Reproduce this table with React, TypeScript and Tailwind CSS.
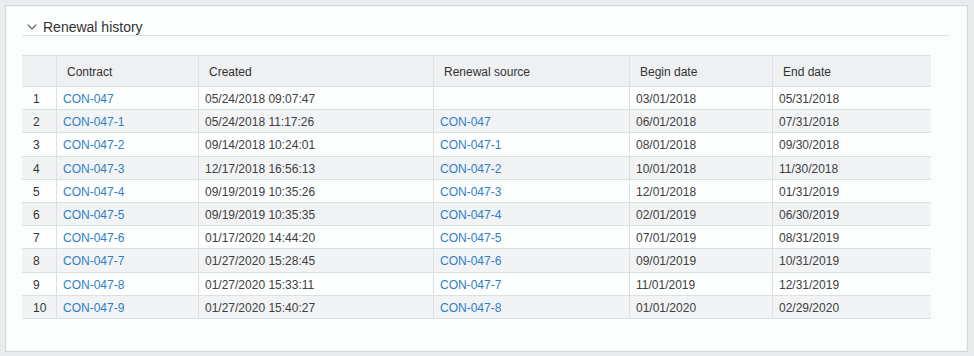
import React from "react";

type Row = { n: number; contract: string; created: string; source: string; begin: string; end: string };

const rows: Row[] = [
  { n: 1, contract: "CON-047", created: "05/24/2018 09:07:47", source: "", begin: "03/01/2018", end: "05/31/2018" },
  { n: 2, contract: "CON-047-1", created: "05/24/2018 11:17:26", source: "CON-047", begin: "06/01/2018", end: "07/31/2018" },
  { n: 3, contract: "CON-047-2", created: "09/14/2018 10:24:01", source: "CON-047-1", begin: "08/01/2018", end: "09/30/2018" },
  { n: 4, contract: "CON-047-3", created: "12/17/2018 16:56:13", source: "CON-047-2", begin: "10/01/2018", end: "11/30/2018" },
  { n: 5, contract: "CON-047-4", created: "09/19/2019 10:35:26", source: "CON-047-3", begin: "12/01/2018", end: "01/31/2019" },
  { n: 6, contract: "CON-047-5", created: "09/19/2019 10:35:35", source: "CON-047-4", begin: "02/01/2019", end: "06/30/2019" },
  { n: 7, contract: "CON-047-6", created: "01/17/2020 14:44:20", source: "CON-047-5", begin: "07/01/2019", end: "08/31/2019" },
  { n: 8, contract: "CON-047-7", created: "01/27/2020 15:28:45", source: "CON-047-6", begin: "09/01/2019", end: "10/31/2019" },
  { n: 9, contract: "CON-047-8", created: "01/27/2020 15:33:11", source: "CON-047-7", begin: "11/01/2019", end: "12/31/2019" },
  { n: 10, contract: "CON-047-9", created: "01/27/2020 15:40:27", source: "CON-047-8", begin: "01/01/2020", end: "02/29/2020" },
];

const cols = "grid grid-cols-[34px_142px_235px_196px_143px_159px]";

export default function App() {
  return (
    <div
      className="w-[974px] h-[356px] bg-[#e9ebec] p-[5px] pr-[6px] pb-[4px]"
      style={{ fontFamily: '"Liberation Sans", Arial, sans-serif' }}
    >
      <div className="h-full border border-[#d3d7da] bg-[#fcfdfd] pl-[16px] pr-[18px] pt-[11px] shadow-[inset_0_0_0_1px_#f3f5f6]">
        <div className="flex items-center h-[19px] pt-[1px] border-b border-[#dfe2e4]">
          <svg width="10" height="6" viewBox="0 0 10 6" className="ml-[5px] mr-[6px] mt-[1px]">
            <path d="M0.7 0.7 L5 5 L9.3 0.7" fill="none" stroke="#555b60" strokeWidth="1.1" />
          </svg>
          <span className="text-[14px] leading-[18px] text-[#333]">Renewal history</span>
        </div>

        <div className="mt-[19px] w-[909px] text-[12px] leading-[14px]">
          <div className={`${cols} h-[32px] bg-[#eef0f1] border-t border-b border-[#dde0e2] text-[#333]`}>
            <div />
            <div className="border-l border-[#dde0e2] flex items-center pt-[2px] pl-[10px]">Contract</div>
            <div className="border-l border-[#dde0e2] flex items-center pt-[2px] pl-[10px]">Created</div>
            <div className="border-l border-[#dde0e2] flex items-center pt-[2px] pl-[10px]">Renewal source</div>
            <div className="border-l border-[#dde0e2] flex items-center pt-[2px] pl-[10px]">Begin date</div>
            <div className="border-l border-[#dde0e2] flex items-center pt-[2px] pl-[10px]">End date</div>
          </div>
          {rows.map((r) => (
            <div
              key={r.n}
              className={`${cols} h-[23.2px] border-b border-[#dde0e2] text-[#404040] ${
                r.n % 2 === 0 ? "bg-[#f1f3f4]" : "bg-[#fdfefe]"
              }`}
            >
              <div className="flex items-center pt-[2px] pl-[11px] text-[#333]">{r.n}</div>
              <div className="border-l border-[#dde0e2] flex items-center pt-[2px] pl-[6px] text-[#2f7ec9]">{r.contract}</div>
              <div className="border-l border-[#dde0e2] flex items-center pt-[2px] pl-[6px]">{r.created}</div>
              <div className="border-l border-[#dde0e2] flex items-center pt-[2px] pl-[6px] text-[#2f7ec9]">{r.source}</div>
              <div className="border-l border-[#dde0e2] flex items-center pt-[2px] pl-[6px]">{r.begin}</div>
              <div className="border-l border-[#dde0e2] flex items-center pt-[2px] pl-[6px]">{r.end}</div>
            </div>
          ))}
        </div>
      </div>
    </div>
  );
}
